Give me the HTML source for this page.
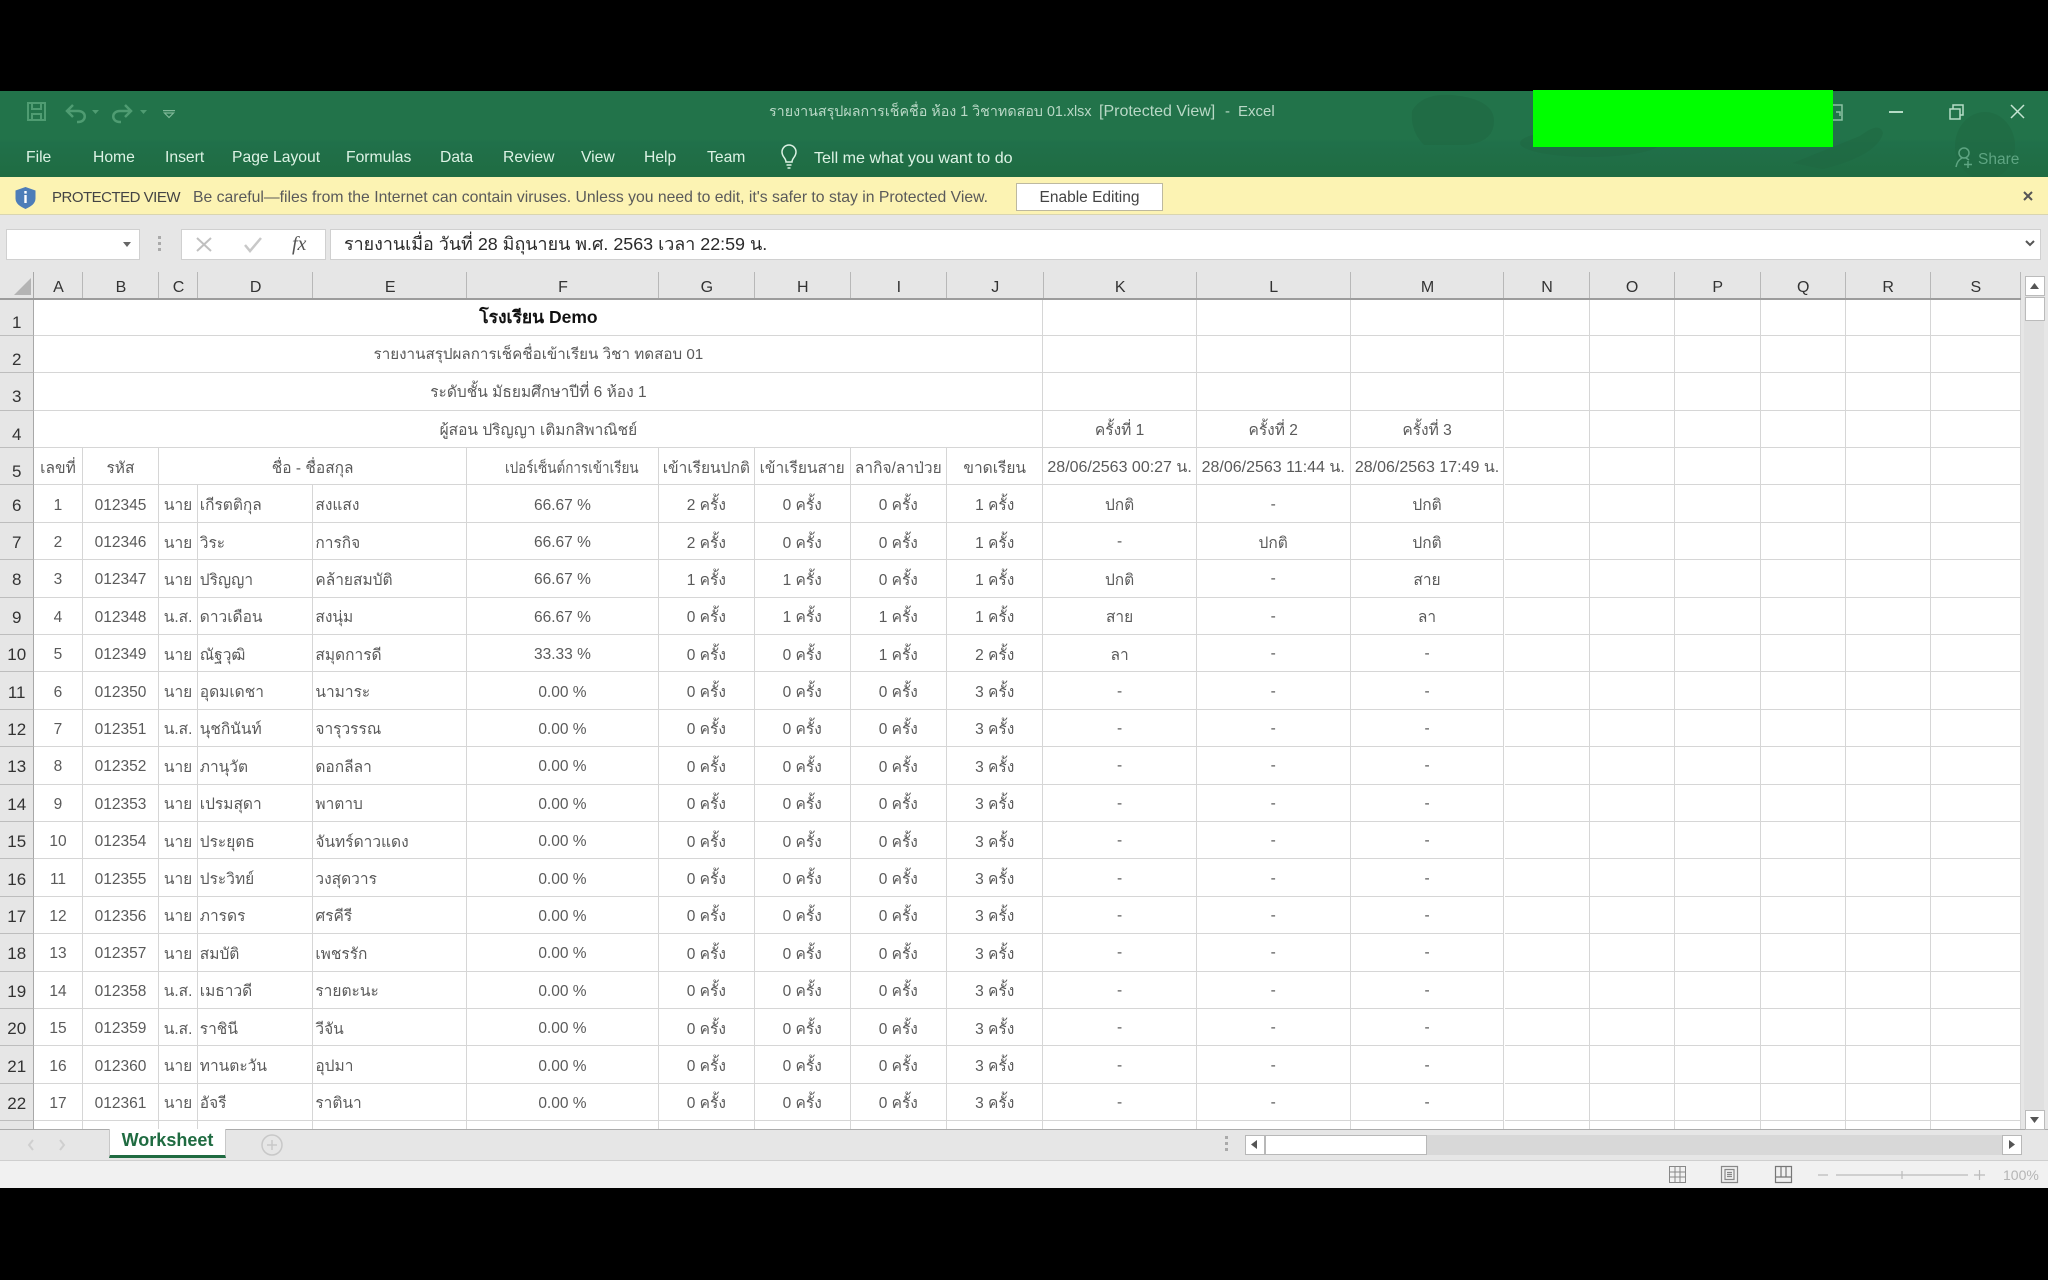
<!DOCTYPE html>
<html lang="th"><head><meta charset="utf-8"><title>Excel</title>
<style>
html,body{margin:0;padding:0;background:#000;width:2048px;height:1280px;overflow:hidden}
body{position:relative;font-family:"Liberation Sans","Noto Sans CJK SC",sans-serif;color:#555;filter:blur(.35px)}
.a{position:absolute;white-space:nowrap}
svg{position:absolute;overflow:visible}
.tab{top:148px;font-size:15.7px;line-height:20px;color:#dcf2e4}
.g{position:absolute;left:0;top:0;width:1504.5px;display:grid;grid-template-columns:34.4px 48.2px 76.8px 38.4px 115.6px 153.6px 192px 95.8px 95.9px 96.3px 96.5px 153.3px 153.9px 153.8px;grid-auto-rows:37.4px;font-size:15.5px;background:#fff}
.g>div{box-sizing:border-box;border-right:1px solid #d6d6d6;border-bottom:1.5px solid #d6d6d6;display:flex;align-items:center;justify-content:center;white-space:nowrap;overflow:visible;padding-top:2px;background:#fff;color:#5a5a5a}
.g>div.n{background:#e6e6e6;border-right:1px solid #a8a8a8;border-bottom:1px solid #bdbdbd;color:#333;font-size:17px;padding-top:4px}
.g>div.l{padding-top:12px}
.g>div.t{justify-content:flex-start;padding-left:2px}
.g>div:nth-child(14n+34),.g>div:nth-child(14n+35),.g>div:nth-child(14n+39){padding-top:4px}
.d{font-size:16px}
.m{grid-column:span 10}
.g2{position:absolute;left:0;top:0;width:517px;display:grid;grid-auto-rows:37.4px}
.g2>div{box-sizing:border-box;border-bottom:1.5px solid #d6d6d6}
.c{top:272px;height:26px;box-sizing:border-box;border-right:1px solid #b8b8b8;background:#e6e6e6;color:#333;font-size:16px;line-height:31px;text-align:center;padding-left:1px}
.v{position:absolute;top:0;width:1px;height:831px;background:#d6d6d6}
</style></head><body>

<!-- title bar + ribbon -->
<div class="a" style="left:0;top:91px;width:2048px;height:86px;background:linear-gradient(#22734a,#22734a 48px,#20704a 52px,#1f6c42);overflow:hidden">
<svg width="2048" height="86" style="left:0;top:0"><g fill="#1f6540" opacity=".45"><path d="M1412 20q10-18 40-16q42 4 42 26q0 22-30 24l-40 0q-14-14-12-34z"/><ellipse cx="1590" cy="52" rx="70" ry="14"/><path d="M1860 45q20 -15 23 -3q-5 22 -60 36l-30 -6z"/><ellipse cx="1985" cy="55" rx="30" ry="34"/></g></svg>
</div>

<!-- quick access -->
<svg width="48" height="30" style="left:24px;top:98px" fill="none" stroke="#4f9c72" stroke-width="2"><path d="M4 5h17v17H4zM8 5v6h9V5M8 22v-6h9v6"/></svg>
<svg width="40" height="24" style="left:64px;top:102px" fill="none" stroke="#4f9c72" stroke-width="2.5"><path d="M3 9h11c9 0 9 11 0 11h-1M9 3L3 9l6 6"/></svg>
<svg width="10" height="6" style="left:92px;top:110px"><path d="M0 0h7L3.500 4z" fill="#4f9c72"/></svg>
<svg width="40" height="24" style="left:112px;top:102px" fill="none" stroke="#4f9c72" stroke-width="2.500"><path d="M19 9H8c-9 0-9 11 0 11h1M13 3l6 6-6 6"/></svg>
<svg width="10" height="6" style="left:140px;top:110px"><path d="M0 0h7L3.500 4z" fill="#4f9c72"/></svg>
<svg width="14" height="10" style="left:163px;top:110px" fill="none" stroke="#7fb898" stroke-width="1.200"><path d="M0 .6h12M1.500 3h9L6 7.500z"/></svg>

<div class="a" style="left:769px;top:102px;font-size:14.300px;line-height:20px;color:#b9d8c6">รายงานสรุปผลการเช็คชื่อ ห้อง 1 วิชาทดสอบ 01.xlsx</div>
<div class="a" style="left:1099px;top:102px;font-size:16px;line-height:20px;color:#b9d8c6">[Protected View]</div>
<div class="a" style="left:1225px;top:102px;font-size:15px;line-height:20px;color:#b9d8c6">-</div>
<div class="a" style="left:1238px;top:102px;font-size:15px;line-height:20px;color:#b9d8c6">Excel</div>

<div class="a tab" style="left:26px">File</div>
<div class="a tab" style="left:93px">Home</div>
<div class="a tab" style="left:165px">Insert</div>
<div class="a tab" style="left:232px">Page Layout</div>
<div class="a tab" style="left:346px">Formulas</div>
<div class="a tab" style="left:440px">Data</div>
<div class="a tab" style="left:503px">Review</div>
<div class="a tab" style="left:581px">View</div>
<div class="a tab" style="left:644px">Help</div>
<div class="a tab" style="left:707px">Team</div>
<svg width="20" height="26" style="left:780px;top:144px" fill="none" stroke="#dcf2e4" stroke-width="1.500"><path d="M6 18c0-4-4-5-4-10a7 7 0 0 1 14 0c0 5-4 6-4 10zM6.500 21h5M7.500 24h3"/></svg>
<div class="a tab" style="left:814px;font-size:16.100px;top:147.500px">Tell me what you want to do</div>

<!-- redaction -->
<div class="a" style="left:1533px;top:90px;width:300px;height:57px;background:#0f0"></div>

<!-- window controls -->
<svg width="12" height="20" style="left:1833px;top:103px" fill="none" stroke="#8cc2a3" stroke-width="1.500"><path d="M0 2h9v15H0M3 9h4v4"/></svg>
<svg width="16" height="4" style="left:1889px;top:110px"><path d="M0 2h14" stroke="#b5dcc6" stroke-width="2"/></svg>
<svg width="16" height="16" style="left:1949px;top:104px" fill="none" stroke="#b5dcc6" stroke-width="1.500"><path d="M1 5h10v10H1zM4 5V1h10v10h-3"/></svg>
<svg width="16" height="16" style="left:2010px;top:104px" fill="none" stroke="#c6e4d3" stroke-width="1.500"><path d="M1 1l13 13M14 1L1 14"/></svg>
<svg width="20" height="24" style="left:1955px;top:147px" fill="none" stroke="#5ea582" stroke-width="1.500"><circle cx="9" cy="6" r="5"/><path d="M1 20c1-6 4-8 6-9M11 11l3 2M13 21v-7M9 17.500h8"/></svg>
<div class="a" style="left:1978px;top:150px;font-size:15.500px;line-height:20px;color:#5ea582">Share</div>

<!-- protected view bar -->
<div class="a" style="left:0;top:177px;width:2048px;height:38px;box-sizing:border-box;background:#fcf3b3;border-bottom:1px solid #d9d5b0"></div>
<svg width="24" height="24" style="left:14px;top:186px"><path d="M11.500 1l10 3.500v8c0 5-4.500 8-10 10.500c-5.500-2.500-10-5.500-10-10.500v-8z" fill="#4d7db8"/><rect x="10.300" y="5" width="2.400" height="2.600" fill="#fff"/><rect x="10.300" y="9" width="2.400" height="8" fill="#fff"/></svg>
<div class="a" style="left:52px;top:188px;font-size:15px;letter-spacing:-.5px;line-height:20px;color:#444">PROTECTED VIEW</div>
<div class="a" style="left:193px;top:188px;font-size:15.760px;line-height:20px;color:#5a5a5a">Be careful—files from the Internet can contain viruses. Unless you need to edit, it's safer to stay in Protected View.</div>
<div class="a" style="left:1016px;top:183px;width:147px;height:28px;box-sizing:border-box;background:#fff;border:1px solid #bdb9a0;font-size:15.500px;line-height:27px;text-align:center;color:#444">Enable Editing</div>
<svg width="12" height="12" style="left:2023px;top:191px" fill="none" stroke="#555" stroke-width="2"><path d="M1 1l8 8M9 1L1 9"/></svg>

<!-- formula bar -->
<div class="a" style="left:0;top:215px;width:2048px;height:57px;background:#e6e6e6"></div>
<div class="a" style="left:6px;top:229px;width:134px;height:31px;background:#fff;box-sizing:border-box;border:1px solid #d0d0d0"></div>
<svg width="10" height="6" style="left:123px;top:242px"><path d="M0 0h8L4 5z" fill="#666"/></svg>
<svg width="4" height="16" style="left:158px;top:236px" fill="#aaa"><rect x="0" y="0" width="3" height="3"/><rect x="0" y="6" width="3" height="3"/><rect x="0" y="12" width="3" height="3"/></svg>
<div class="a" style="left:181px;top:229px;width:145px;height:31px;background:#fff;box-sizing:border-box;border:1px solid #d0d0d0"></div>
<svg width="18" height="16" style="left:196px;top:237px" fill="none" stroke="#c0c0c0" stroke-width="2"><path d="M1 1l14 13M15 1L1 14"/></svg>
<svg width="20" height="16" style="left:244px;top:237px" fill="none" stroke="#c8c8c8" stroke-width="2.500"><path d="M1 8l5 6 11-13"/></svg>
<div class="a" style="left:292px;top:232px;font:italic 20px/24px 'Liberation Serif',serif;color:#555">fx</div>
<div class="a" style="left:330px;top:229px;width:1711px;height:31px;background:#fff;box-sizing:border-box;border:1px solid #d0d0d0"></div>
<div class="a" style="left:344px;top:234px;font-size:17.900px;line-height:21px;color:#2a2a2a">รายงานเมื่อ วันที่ 28 มิถุนายน พ.ศ. 2563 เวลา 22:59 น.</div>
<svg width="12" height="8" style="left:2025px;top:240px" fill="none" stroke="#555" stroke-width="2"><path d="M1 1l4 4 4-4"/></svg>

<!-- column headers -->
<div class="a" style="left:0;top:272px;width:2048px;height:28px;background:#e6e6e6"></div>
<div class="a" style="left:0;top:272px;width:34.400px;height:26px;box-sizing:border-box;background:#e6e6e6;border-right:1px solid #a8a8a8"></div>
<svg width="18" height="18" style="left:14px;top:278px"><path d="M17 0v17H0z" fill="#b4b4b4"/></svg>
<div class="a c" style="left:34.400px;width:48.200px">A</div>
<div class="a c" style="left:82.600px;width:76.800px">B</div>
<div class="a c" style="left:159.400px;width:38.400px">C</div>
<div class="a c" style="left:197.800px;width:115.600px">D</div>
<div class="a c" style="left:313.400px;width:153.600px">E</div>
<div class="a c" style="left:467px;width:192px">F</div>
<div class="a c" style="left:659px;width:95.800px">G</div>
<div class="a c" style="left:754.800px;width:95.900px">H</div>
<div class="a c" style="left:850.700px;width:96.300px">I</div>
<div class="a c" style="left:947px;width:96.500px">J</div>
<div class="a c" style="left:1043.500px;width:153.300px">K</div>
<div class="a c" style="left:1196.800px;width:153.900px">L</div>
<div class="a c" style="left:1350.700px;width:153.800px">M</div>
<div class="a c" style="left:1504.500px;width:85.100px">N</div>
<div class="a c" style="left:1589.600px;width:85px">O</div>
<div class="a c" style="left:1674.600px;width:86.200px">P</div>
<div class="a c" style="left:1760.800px;width:84.900px">Q</div>
<div class="a c" style="left:1845.700px;width:84.900px">R</div>
<div class="a c" style="left:1930.600px;width:90.400px">S</div>
<div class="a" style="left:0;top:298px;width:2021px;height:1.500px;background:#9c9c9c;z-index:2"></div>

<!-- empty N-S area -->
<div class="a" style="left:1504px;top:298.500px;width:517px;height:831px;background:#fff;overflow:hidden">
<div class="g2"><div></div><div></div><div></div><div></div><div></div><div></div><div></div><div></div><div></div><div></div><div></div><div></div><div></div><div></div><div></div><div></div><div></div><div></div><div></div><div></div><div></div><div></div><div></div></div>
<div class="v" style="left:84.600px"></div><div class="v" style="left:169.600px"></div><div class="v" style="left:255.800px"></div><div class="v" style="left:340.700px"></div><div class="v" style="left:425.600px"></div><div class="v" style="left:516px"></div>
</div>

<!-- sheet -->
<div class="a" style="left:0;top:298.500px;width:1505px;height:831px;overflow:hidden">
<div class="g">
<div class="n l">1</div><div class="m" style="color:#111;font-weight:bold;font-size:17.500px;padding-top:0">โรงเรียน Demo</div><div></div><div></div><div></div>
<div class="n l">2</div><div class="m" style="font-size:15.200px;padding-top:0">รายงานสรุปผลการเช็คชื่อเข้าเรียน วิชา ทดสอบ 01</div><div></div><div></div><div></div>
<div class="n l">3</div><div class="m" style="padding-top:0">ระดับชั้น มัธยมศึกษาปีที่ 6 ห้อง 1</div><div></div><div></div><div></div>
<div class="n l">4</div><div class="m">ผู้สอน ปริญญา เติมกสิพาณิชย์</div><div>ครั้งที่ 1</div><div>ครั้งที่ 2</div><div>ครั้งที่ 3</div>
<div class="n l">5</div><div>เลขที่</div><div>รหัส</div><div style="grid-column:span 3">ชื่อ - ชื่อสกุล</div><div><span style="display:inline-block;transform:translateX(9px) scaleX(.87)">เปอร์เซ็นต์การเข้าเรียน</span></div><div>เข้าเรียนปกติ</div><div>เข้าเรียนสาย</div><div>ลากิจ/ลาป่วย</div><div>ขาดเรียน</div><div class="d">28/06/2563 00:27 น.</div><div class="d">28/06/2563 11:44 น.</div><div class="d">28/06/2563 17:49 น.</div>
<div class="n">6</div><div>1</div><div>012345</div><div>นาย</div><div class="t">เกีรตติกุล</div><div class="t">สงแสง</div><div>66.67 %</div><div>2 ครั้ง</div><div>0 ครั้ง</div><div>0 ครั้ง</div><div>1 ครั้ง</div><div>ปกติ</div><div>-</div><div>ปกติ</div>
<div class="n">7</div><div>2</div><div>012346</div><div>นาย</div><div class="t">วิระ</div><div class="t">การกิจ</div><div>66.67 %</div><div>2 ครั้ง</div><div>0 ครั้ง</div><div>0 ครั้ง</div><div>1 ครั้ง</div><div>-</div><div>ปกติ</div><div>ปกติ</div>
<div class="n">8</div><div>3</div><div>012347</div><div>นาย</div><div class="t">ปริญญา</div><div class="t">คล้ายสมบัติ</div><div>66.67 %</div><div>1 ครั้ง</div><div>1 ครั้ง</div><div>0 ครั้ง</div><div>1 ครั้ง</div><div>ปกติ</div><div>-</div><div>สาย</div>
<div class="n">9</div><div>4</div><div>012348</div><div>น.ส.</div><div class="t">ดาวเดือน</div><div class="t">สงนุ่ม</div><div>66.67 %</div><div>0 ครั้ง</div><div>1 ครั้ง</div><div>1 ครั้ง</div><div>1 ครั้ง</div><div>สาย</div><div>-</div><div>ลา</div>
<div class="n">10</div><div>5</div><div>012349</div><div>นาย</div><div class="t">ณัฐวุฒิ</div><div class="t">สมุดการดี</div><div>33.33 %</div><div>0 ครั้ง</div><div>0 ครั้ง</div><div>1 ครั้ง</div><div>2 ครั้ง</div><div>ลา</div><div>-</div><div>-</div>
<div class="n">11</div><div>6</div><div>012350</div><div>นาย</div><div class="t">อุดมเดชา</div><div class="t">นามาระ</div><div>0.00 %</div><div>0 ครั้ง</div><div>0 ครั้ง</div><div>0 ครั้ง</div><div>3 ครั้ง</div><div>-</div><div>-</div><div>-</div>
<div class="n">12</div><div>7</div><div>012351</div><div>น.ส.</div><div class="t">นุชกินันท์</div><div class="t">จารุวรรณ</div><div>0.00 %</div><div>0 ครั้ง</div><div>0 ครั้ง</div><div>0 ครั้ง</div><div>3 ครั้ง</div><div>-</div><div>-</div><div>-</div>
<div class="n">13</div><div>8</div><div>012352</div><div>นาย</div><div class="t">ภานุวัต</div><div class="t">ดอกลีลา</div><div>0.00 %</div><div>0 ครั้ง</div><div>0 ครั้ง</div><div>0 ครั้ง</div><div>3 ครั้ง</div><div>-</div><div>-</div><div>-</div>
<div class="n">14</div><div>9</div><div>012353</div><div>นาย</div><div class="t">เปรมสุดา</div><div class="t">พาตาบ</div><div>0.00 %</div><div>0 ครั้ง</div><div>0 ครั้ง</div><div>0 ครั้ง</div><div>3 ครั้ง</div><div>-</div><div>-</div><div>-</div>
<div class="n">15</div><div>10</div><div>012354</div><div>นาย</div><div class="t">ประยุตธ</div><div class="t">จันทร์ดาวแดง</div><div>0.00 %</div><div>0 ครั้ง</div><div>0 ครั้ง</div><div>0 ครั้ง</div><div>3 ครั้ง</div><div>-</div><div>-</div><div>-</div>
<div class="n">16</div><div>11</div><div>012355</div><div>นาย</div><div class="t">ประวิทย์</div><div class="t">วงสุดวาร</div><div>0.00 %</div><div>0 ครั้ง</div><div>0 ครั้ง</div><div>0 ครั้ง</div><div>3 ครั้ง</div><div>-</div><div>-</div><div>-</div>
<div class="n">17</div><div>12</div><div>012356</div><div>นาย</div><div class="t">ภารดร</div><div class="t">ศรคีรี</div><div>0.00 %</div><div>0 ครั้ง</div><div>0 ครั้ง</div><div>0 ครั้ง</div><div>3 ครั้ง</div><div>-</div><div>-</div><div>-</div>
<div class="n">18</div><div>13</div><div>012357</div><div>นาย</div><div class="t">สมบัติ</div><div class="t">เพชรรัก</div><div>0.00 %</div><div>0 ครั้ง</div><div>0 ครั้ง</div><div>0 ครั้ง</div><div>3 ครั้ง</div><div>-</div><div>-</div><div>-</div>
<div class="n">19</div><div>14</div><div>012358</div><div>น.ส.</div><div class="t">เมธาวดี</div><div class="t">รายตะนะ</div><div>0.00 %</div><div>0 ครั้ง</div><div>0 ครั้ง</div><div>0 ครั้ง</div><div>3 ครั้ง</div><div>-</div><div>-</div><div>-</div>
<div class="n">20</div><div>15</div><div>012359</div><div>น.ส.</div><div class="t">ราชินี</div><div class="t">วีจัน</div><div>0.00 %</div><div>0 ครั้ง</div><div>0 ครั้ง</div><div>0 ครั้ง</div><div>3 ครั้ง</div><div>-</div><div>-</div><div>-</div>
<div class="n">21</div><div>16</div><div>012360</div><div>นาย</div><div class="t">ทานตะวัน</div><div class="t">อุปมา</div><div>0.00 %</div><div>0 ครั้ง</div><div>0 ครั้ง</div><div>0 ครั้ง</div><div>3 ครั้ง</div><div>-</div><div>-</div><div>-</div>
<div class="n">22</div><div>17</div><div>012361</div><div>นาย</div><div class="t">อัจรี</div><div class="t">ราตินา</div><div>0.00 %</div><div>0 ครั้ง</div><div>0 ครั้ง</div><div>0 ครั้ง</div><div>3 ครั้ง</div><div>-</div><div>-</div><div>-</div>
<div class="n"></div><div></div><div></div><div></div><div></div><div></div><div></div><div></div><div></div><div></div><div></div><div></div><div></div><div></div>
</div></div>

<!-- vertical scrollbar -->
<div class="a" style="left:2021px;top:272px;width:27px;height:857px;background:#e6e6e6;z-index:3"></div>
<div class="a" style="left:2024px;top:296px;width:20px;height:814px;background:#e0e0e0;z-index:3"></div>
<div class="a" style="left:2025px;top:276px;width:20px;height:20px;box-sizing:border-box;background:#fff;border:1px solid #bbb;z-index:3"></div>
<svg width="10" height="7" style="left:2030px;top:283px;z-index:4"><path d="M0 6h9L4.500 0z" fill="#555"/></svg>
<div class="a" style="left:2025px;top:297px;width:20px;height:24px;box-sizing:border-box;background:#fff;border:1px solid #bbb;z-index:3"></div>
<div class="a" style="left:2025px;top:1110px;width:20px;height:20px;box-sizing:border-box;background:#fff;border:1px solid #bbb;z-index:3"></div>
<svg width="10" height="7" style="left:2030px;top:1117px;z-index:4"><path d="M0 0h9L4.500 6z" fill="#555"/></svg>

<!-- sheet tabs bar -->
<div class="a" style="left:0;top:1129px;width:2048px;height:32px;box-sizing:border-box;background:#e6e6e6;border-top:1.500px solid #ababab;border-bottom:1px solid #cfcfcf"></div>
<svg width="8" height="12" style="left:28px;top:1139px" fill="none" stroke="#cfcfcf" stroke-width="2"><path d="M5 1L1 6l4 5"/></svg>
<svg width="8" height="12" style="left:59px;top:1139px" fill="none" stroke="#cfcfcf" stroke-width="2"><path d="M1 1l4 5-4 5"/></svg>
<div class="a" style="left:109px;top:1129px;width:117px;height:29px;box-sizing:border-box;background:#fff;border-bottom:3px solid #1f6b41;border-left:1px solid #c8c8c8;border-right:1px solid #c8c8c8;font-weight:bold;font-size:18px;line-height:23px;text-align:center;color:#1f6b41">Worksheet</div>
<svg width="22" height="22" style="left:261px;top:1134px" fill="none" stroke="#c8c8c8" stroke-width="1.500"><circle cx="11" cy="11" r="10"/><path d="M11 6v10M6 11h10"/></svg>
<svg width="4" height="18" style="left:1225px;top:1136px" fill="#aaa"><rect width="3" height="3"/><rect y="6" width="3" height="3"/><rect y="12" width="3" height="3"/></svg>
<div class="a" style="left:1245px;top:1135px;width:20px;height:20px;box-sizing:border-box;background:#fff;border:1px solid #b8b8b8"></div>
<svg width="8" height="10" style="left:1251px;top:1140px"><path d="M6 0v9L0 4.500z" fill="#555"/></svg>
<div class="a" style="left:1265px;top:1135px;width:162px;height:20px;box-sizing:border-box;background:#fff;border:1px solid #b8b8b8"></div>
<div class="a" style="left:1427px;top:1135px;width:575px;height:20px;background:#d8d8d8"></div>
<div class="a" style="left:2002px;top:1135px;width:20px;height:20px;box-sizing:border-box;background:#fff;border:1px solid #b8b8b8"></div>
<svg width="8" height="10" style="left:2009px;top:1140px"><path d="M0 0v9l6-4.500z" fill="#555"/></svg>

<!-- status bar -->
<div class="a" style="left:0;top:1161px;width:2048px;height:27px;background:#f1f1f1"></div>
<svg width="18" height="18" style="left:1669px;top:1166px" fill="none" stroke="#888" stroke-width="1"><path d="M.5.500h16v16H.5zM.5 6h16M.5 11h16M6 .500v16M11 .500v16"/></svg>
<svg width="18" height="18" style="left:1721px;top:1166px" fill="none" stroke="#888" stroke-width="1.200"><path d="M.5.500h16v16H.5zM4 3.500h9v10H4zM6 6.500h5M6 8.500h5M6 10.500h5"/></svg>
<svg width="18" height="18" style="left:1775px;top:1166px" fill="none" stroke="#777" stroke-width="1.200"><path d="M.5.500h16v16H.5zM.5 11h16M6 .500V11M11 .500V11"/></svg>
<svg width="170" height="14" style="left:1818px;top:1168px" fill="none" stroke="#bbb" stroke-width="1.200"><path d="M0 7h10M18 7h132M84 3v8M156 7h11M161.500 2v10"/></svg>
<div class="a" style="left:2003px;top:1166px;font-size:14px;line-height:18px;color:#b5b5b5">100%</div>

</body></html>
